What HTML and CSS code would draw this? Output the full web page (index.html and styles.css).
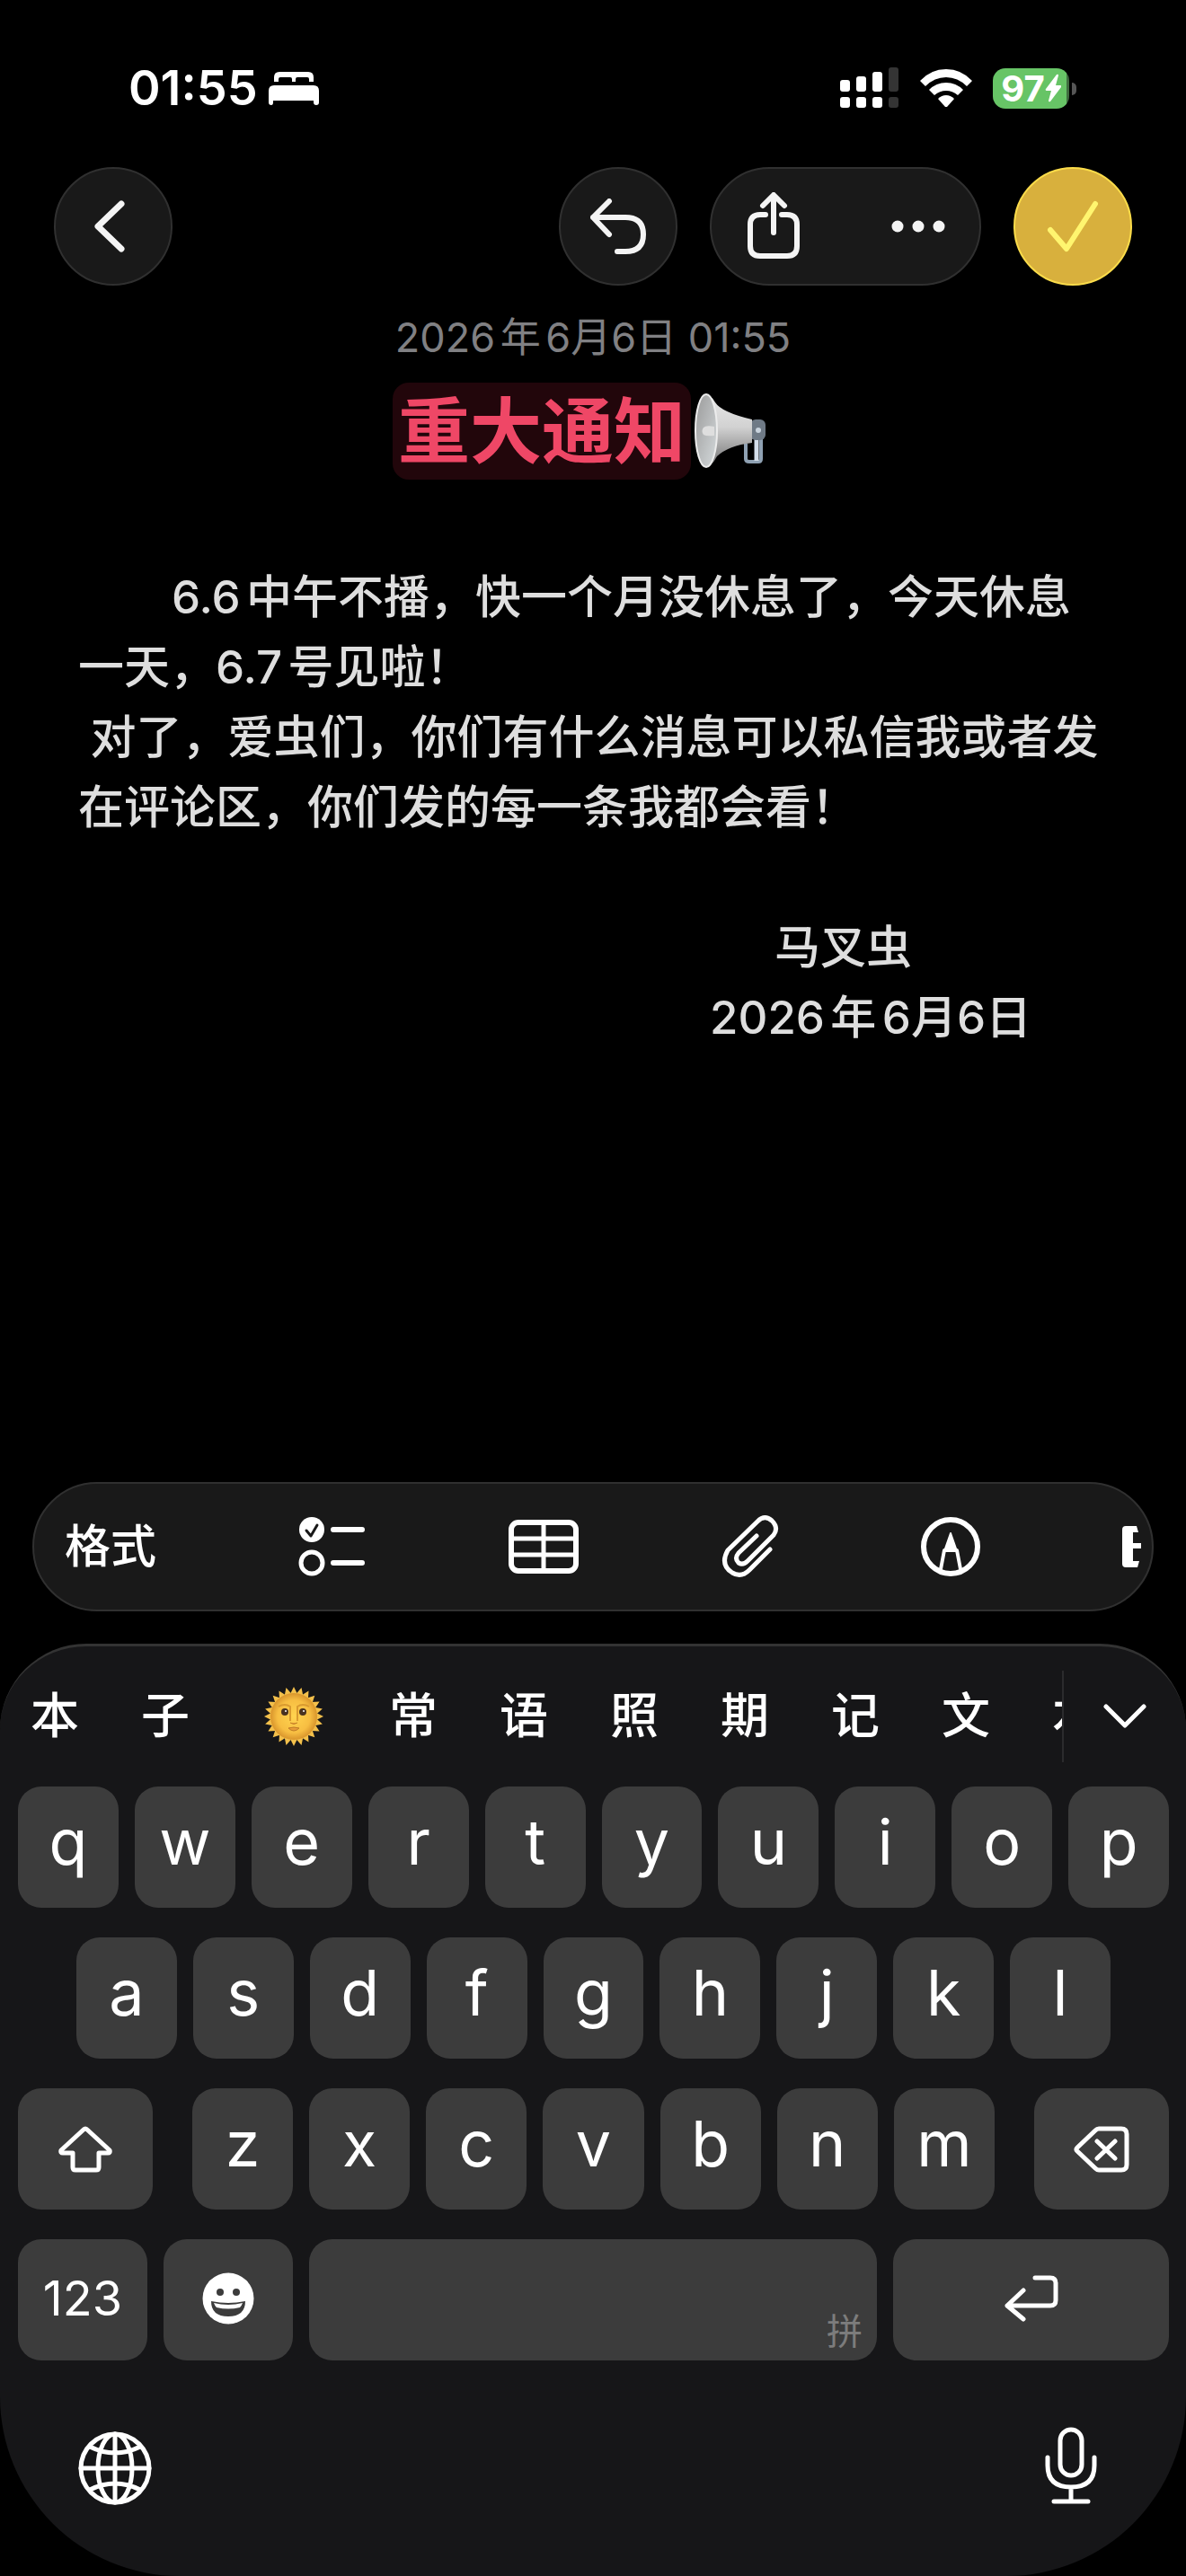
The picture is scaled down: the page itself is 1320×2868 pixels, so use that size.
FILE: index.html
```html
<!DOCTYPE html>
<html lang="zh-CN">
<head>
<meta charset="utf-8">
<meta name="viewport" content="width=device-width, initial-scale=1">
<title>重大通知</title>
<link rel="stylesheet" href="styles.css">
</head>
<body>

<!-- status bar -->
<header class="status">
  <span class="time">01:55</span>
  <svg class="bed" width="56" height="38" viewBox="0 0 56 38" fill="#fff">
    <path d="M6 12V7q0-6 6-6h32q6 0 6 6v5h-5V9q0-2-2-2h-11q-2 0-2 2v3h-4V9q0-2-2-2H13q-2 0-2 2v3z"/>
    <path d="M0 22q0-6 6-6h44q6 0 6 6v13q0 3-3 3t-3-3v-2H5v2q0 3-2 3-3 0-3-3z"/>
  </svg>
  <div class="status-right">
    <svg width="66" height="46" viewBox="0 0 66 46" fill="#fff">
      <rect x="0" y="14" width="11" height="13" rx="3"/>
      <rect x="18" y="10" width="11" height="17" rx="3"/>
      <rect x="36" y="5" width="11" height="22" rx="3"/>
      <rect x="54" y="0" width="11" height="27" rx="3" fill="#343434"/>
      <rect x="0" y="33" width="11" height="12" rx="3"/>
      <rect x="18" y="33" width="11" height="12" rx="3"/>
      <rect x="36" y="33" width="11" height="12" rx="3"/>
      <rect x="54" y="33" width="11" height="12" rx="3" fill="#343434"/>
    </svg>
    <svg class="wifi" width="58" height="42" viewBox="0 0 58 42" fill="#fff">
      <path d="M0 13Q12 0 29 0t29 13l-6 6Q42 9 29 9T6 19z"/>
      <path d="M10 23q8-8 19-8t19 8l-6 6q-6-5-13-5t-13 5z"/>
      <path d="M20 33q4-4 9-4t9 4l-8 9q-1 1-2 0z"/>
    </svg>
    <div class="battery">97<svg width="18" height="36" viewBox="0 0 18 32" fill="#fff"><path d="M13 1L1 17q-1 2 1 2h5L4 30q0 2 2 1l12-16q1-2-1-2h-5l3-11q0-2-2-1z"/></svg></div>
  </div>
</header>

<!-- top buttons -->
<nav class="topbar">
  <button class="round back" aria-label="返回">
    <svg width="34" height="58" viewBox="0 0 34 58" class="line w7"><path d="M30 4L4 29l26 25"/></svg>
  </button>
  <button class="round" aria-label="撤销">
    <svg width="62" height="62" viewBox="0 0 62 62" class="line w6"><path d="M21 3L3 21l18 19M3 21h36q20 0 20 19t-20 19h-9"/></svg>
  </button>
  <div class="pill">
    <button aria-label="共享">
      <svg width="58" height="74" viewBox="0 0 58 74" class="line w6"><path d="M20 25h-6q-11 0-11 11v24q0 11 11 11h30q11 0 11-11V36q0-11-11-11h-6M29 45V4M17 15L29 3l12 12"/></svg>
    </button>
    <button aria-label="更多">
      <svg width="60" height="14" viewBox="0 0 60 14" fill="#f4f4f4"><circle cx="7" cy="7" r="6.500"/><circle cx="30" cy="7" r="6.500"/><circle cx="53" cy="7" r="6.500"/></svg>
    </button>
  </div>
  <button class="round done" aria-label="完成">
    <svg width="58" height="58" viewBox="0 0 58 58" class="line w6"><path d="M4 33l18 21L54 4"/></svg>
  </button>
</nav>

<!-- note -->
<main class="note">
  <time class="date">2026年6<span class="tight">月6日</span> 01:55</time>
  <h1><mark>重大通知</mark><svg width="80" height="84" viewBox="0 0 80 84" role="img" aria-label="喇叭">
    <defs>
      <linearGradient id="cone" x1="0" y1="0" x2="0" y2="1"><stop offset="0" stop-color="#e8e8e8"/><stop offset=".45" stop-color="#d2d2d2"/><stop offset="1" stop-color="#6f6f70"/></linearGradient>
      <linearGradient id="bell" x1="0" y1="0" x2="1" y2="1"><stop offset="0" stop-color="#9a9a9a"/><stop offset="1" stop-color="#d5dadc"/></linearGradient>
    </defs>
    <path d="M57 56v17q0 3 4 3h10q3 0 3-3V44" fill="none" stroke="#8fa1b3" stroke-width="4"/>
    <path d="M69 42v33" stroke="#d4deea" stroke-width="5"/>
    <rect x="62" y="29" width="17" height="23" rx="6" fill="#6f7a86"/>
    <circle cx="71" cy="41" r="3" fill="#c9d3dd"/>
    <path d="M12 1q6 0 11 9 7 11 41 19v26Q38 58 25 70q-6 12-13 12z" fill="url(#cone)"/>
    <ellipse cx="13" cy="41.500" rx="12" ry="40.500" fill="url(#bell)" stroke="#ececec" stroke-width="2"/>
    <path d="M10 38q3-3 12-1v10q-9 1-12-1-3-4 0-8z" fill="#dedede"/>
  </svg></h1>
  <div class="text">
    <p class="first">6.6中午不播，快一个月没休息了，今天休息一天，6.7号见啦！</p>
    <p> 对了，爱虫们，你们有什么消息可以私信我或者发在评论区，你们发的每一条我都会看！</p>
    <p class="sign">马叉虫</p>
    <p class="sign-date">2026年6<span class="tight">月6日</span></p>
  </div>
</main>

<!-- format toolbar -->
<div class="tools">
  <button class="format">格式</button>
  <button aria-label="核对清单">
    <svg width="76" height="66" viewBox="0 0 76 66">
      <circle cx="15" cy="14" r="14" fill="#fff"/>
      <path d="M9 15l5 6 7-12" fill="none" stroke="#191919" stroke-width="3" stroke-linecap="round" stroke-linejoin="round"/>
      <circle cx="15" cy="51" r="12" fill="none" stroke="#fff" stroke-width="5"/>
      <path d="M39 14h32M39 51h32" stroke="#fff" stroke-width="6" stroke-linecap="round"/>
    </svg>
  </button>
  <button aria-label="表格">
    <svg width="78" height="60" viewBox="0 0 78 60" class="line w6"><rect x="3" y="3" width="72" height="54" rx="8"/><path d="M39 3v54M3 21h72M3 39h72" stroke-width="5"/></svg>
  </button>
  <button aria-label="附件">
    <svg width="64" height="70" viewBox="0 0 64 70" class="line w5"><path d="M54 38L31 61q-9 9-19 3-14-9-5-25L40 7q8-8 16-1 8 8 2 16L29 51q-5 5-10 2-5-5 0-11l20-19"/></svg>
  </button>
  <button aria-label="标记">
    <svg width="66" height="66" viewBox="0 0 66 66" class="line w6"><circle cx="33" cy="33" r="30"/><path d="M22 58l4-21h14l4 21" stroke-width="4"/><path d="M33 18l7 20H26z" fill="#fff" stroke-width="2"/></svg>
  </button>
  <button class="more-tool" aria-label="写作工具">
    <svg width="22" height="48" viewBox="0 0 22 48" fill="#fff"><path d="M4 1h12l2 7h-6v12h9v6h-9v14h7l-2 7H4q-4 0-4-4V5q0-4 4-4z"/></svg>
  </button>
</div>

<!-- keyboard -->
<section class="keyboard">
  <div class="candidates">
    <div class="words">
      <button>本</button>
      <button>子</button>
      <button class="sun" aria-label="太阳">
        <svg width="66" height="66" viewBox="0 0 66 66">
          <defs>
            <radialGradient id="face"><stop offset="0" stop-color="#ffd34f"/><stop offset=".7" stop-color="#f7be42"/><stop offset="1" stop-color="#d9952c"/></radialGradient>
            <path id="rays" d="M29 8l4-8 4 8zM29 58l4 8 4-8zM8 29l-8 4 8 4zM58 29l8 4-8 4z"/>
          </defs>
          <g fill="#f3c04b">
            <use href="#rays"/>
            <use href="#rays" transform="rotate(15 33 33)"/>
            <use href="#rays" transform="rotate(30 33 33)"/>
            <use href="#rays" transform="rotate(45 33 33)"/>
            <use href="#rays" transform="rotate(60 33 33)"/>
            <use href="#rays" transform="rotate(75 33 33)"/>
          </g>
          <circle cx="33" cy="33" r="26" fill="url(#face)"/>
          <path d="M16 22q7-4 13 0v16M50 22q-7-4-13 0v16" fill="none" stroke="#d99a2f" stroke-width="2"/>
          <circle cx="23" cy="28" r="4" fill="#4a3220"/><circle cx="43" cy="28" r="4" fill="#4a3220"/>
          <circle cx="24" cy="27" r="1" fill="#fff"/><circle cx="44" cy="27" r="1" fill="#fff"/>
          <path d="M29 40q4 3 8 0M27 46q6-2 12 0-6 6-12 0z" fill="#e79b38" stroke="#bf7c26" stroke-width="1"/>
        </svg>
      </button>
      <button>常</button>
      <button>语</button>
      <button>照</button>
      <button>期</button>
      <button>记</button>
      <button>文</button>
      <button>本</button>
    </div>
    <button class="expand" aria-label="展开">
      <svg width="48" height="28" viewBox="0 0 48 28" class="line w5"><path d="M3 3l21 21L45 3"/></svg>
    </button>
  </div>

  <div class="keys">
    <div class="row">
      <button>q</button><button>w</button><button>e</button><button>r</button><button>t</button><button>y</button><button>u</button><button>i</button><button>o</button><button>p</button>
    </div>
    <div class="row second">
      <button>a</button><button>s</button><button>d</button><button>f</button><button>g</button><button>h</button><button>j</button><button>k</button><button>l</button>
    </div>
    <div class="row third">
      <button class="icon" aria-label="上档">
        <svg width="60" height="52" viewBox="0 0 60 52" class="line w5"><path d="M28 4q2-2 4 0l25 23q1 3-2 3H45v16q0 3-3 3H19q-3 0-3-3V30H5q-3 0-2-3z"/></svg>
      </button>
      <div class="letters">
        <button>z</button><button>x</button><button>c</button><button>v</button><button>b</button><button>n</button><button>m</button>
      </div>
      <button class="icon" aria-label="删除">
        <svg width="62" height="52" viewBox="0 0 62 52" class="line w5"><path d="M28 3h25q6 0 6 6v34q0 6-6 6H28q-2 0-4-2L4 28q-2-2 0-4L24 5q2-2 4-2zM26 17l20 19M46 17L26 36"/></svg>
      </button>
    </div>
    <div class="row fourth">
      <button class="numbers">123</button>
      <button class="icon" aria-label="表情">
        <svg width="58" height="58" viewBox="0 0 58 58">
          <circle cx="29" cy="29" r="28.500" fill="#fff"/>
          <circle cx="20" cy="22" r="4" fill="#3c3c3c"/><circle cx="38" cy="22" r="4" fill="#3c3c3c"/>
          <path d="M10 32q19 4 38 0 0 17-19 17T10 32z" fill="#3c3c3c"/>
          <path d="M13 34q16 4 32 0-1 3-3 5-13 3-26 0-2-2-3-5z" fill="#fff"/>
        </svg>
      </button>
      <button class="space" aria-label="空格">拼</button>
      <button class="icon" aria-label="换行">
        <svg width="60" height="52" viewBox="0 0 60 52" class="line w5"><path d="M34 3h17q6 0 6 6v19q0 6-6 6H3M21 17L3 34l18 15"/></svg>
      </button>
    </div>
  </div>

  <div class="bottom">
    <button aria-label="切换键盘">
      <svg width="82" height="82" viewBox="0 0 82 82" class="line w5"><circle cx="41" cy="41" r="38"/><ellipse cx="41" cy="41" rx="19" ry="38"/><path d="M41 3v76M3 41h76M13 17q28 14 56 0M13 65q28-14 56 0"/></svg>
    </button>
    <button class="mic" aria-label="听写">
      <svg width="58" height="86" viewBox="0 0 58 86" class="line w5"><rect x="17" y="3" width="24" height="51" rx="12"/><path d="M3 34v9q0 24 26 24t26-24v-9M29 67v15M10 83h38"/></svg>
    </button>
  </div>
</section>

</body>
</html>
```

FILE: styles.css
```css
* {box-sizing:border-box;}
body {margin:0; min-height:100vh; display:flex; flex-direction:column; background:#000; color:#fff; font-family:Inter, "Noto Sans CJK SC", sans-serif;}
button {margin:0; padding:0; border:0; background:none; color:inherit; font:inherit; display:flex; align-items:center; justify-content:center;}
svg {display:block; flex:none;}

/* stroked icons */
.line {fill:none; stroke:#fff; stroke-linecap:round; stroke-linejoin:round;}
.w5 {stroke-width:5px;}
.w6 {stroke-width:6px;}
.w7 {stroke-width:7px;}

/* status bar */
.status {display:flex; align-items:center; height:186px; padding:10px 130px 0 143px;}
.time {font-size:54px; font-weight:600; line-height:64px;}
.bed {margin-left:12px;}
.status-right {display:flex; align-items:center; gap:23px; margin-left:auto;}
.battery {position:relative; display:flex; align-items:center; justify-content:center; width:85px; height:45px; border-radius:14px; background:linear-gradient(90deg, #67c466 97%, #3f6b3f 97%); font-size:40px; font-weight:700; line-height:45px;}
.battery::after {content:""; position:absolute; left:88px; top:16px; width:5px; height:14px; border-radius:0 5px 5px 0; background:#555;}

/* top buttons */
.topbar {display:flex; gap:36px; padding:0 60px;}
.round, .pill {height:132px; border:2px solid #303030; border-radius:66px; background:#191919;}
.round {width:132px;}
.back {margin-right:auto; padding-right:8px;}
.pill {display:flex; width:302px;}
.pill button {flex:1;}
.pill button:first-child {padding-right:12px; padding-bottom:2px;}
.pill button:last-child {padding-left:12px;}
.topbar .line {stroke:#f4f4f4;}
.done {border-color:#fbdc4a; background:#d8b03d;}
.topbar .done .line {stroke:#fff56f;}

/* note */
.note {flex:1; padding:26px 87px 0 87px;}
.date {display:block; color:#808083; font-size:45px; line-height:64px; text-align:center; text-autospace:normal;}
h1 {display:flex; align-items:center; justify-content:center; gap:4px; margin:18px 30px 0 0; font-size:80px; line-height:108px;}
mark {padding:0 6px; border-radius:18px; background:#22060b; color:#ef4766;}
.text {margin-top:92px; color:#dedede; font-size:51px; font-weight:500; line-height:78px; text-autospace:normal;}
.text p {margin:0; white-space:pre-wrap;}
.tight {text-autospace:no-autospace;}
.text .first {text-indent:104px;}
.text .sign {margin-top:78px; padding-right:218px; text-align:right;}
.text .sign-date {padding-right:85px; text-align:right;}

/* format toolbar */
.tools {display:flex; align-items:center; justify-content:space-between; height:144px; margin:0 36px 36px; padding:0 11px 0 34px; border:2px solid #303030; border-radius:72px; background:#191919;}
.format {font-size:51px; font-weight:500; line-height:72px; white-space:nowrap;}

/* keyboard */
.keyboard {border-top:3px solid #333; border-radius:96px 96px 200px 200px; background:#161618;}
.candidates {display:flex; align-items:center; height:156px;}
.words {display:flex; align-items:center; gap:69px; flex:1; min-width:0; height:102px; padding-left:34px; overflow:hidden; border-right:2px solid #2b2b2d; font-size:54px; font-weight:500; line-height:80px;}
.words button {flex:none; width:54px;}
.words .sun {width:84px; padding-left:10px;}
.expand {width:136px;}
.keys {display:grid; gap:33px; padding:0 19px 0 20px;}
.row {display:flex; gap:18px;}
.row button {flex:1; height:135px; padding-bottom:12px; border-radius:26px; background:#3c3c3c; font-size:70px; line-height:84px;}
.row .icon {padding-bottom:0;}
.second {padding:0 65px;}
.third {gap:44px;}
.third .icon {flex:none; width:150px;}
.letters {display:flex; gap:18px; flex:1;}
.fourth .icon, .fourth .numbers {flex:none; width:144px;}
.fourth .icon {padding-bottom:4px;}
.fourth .numbers {padding-bottom:4px; font-size:54px;}
.fourth .icon:last-child {width:307px;}
.row .space {align-items:flex-end; justify-content:flex-end; padding:0 16px 8px; color:#7c7c7c; font-size:40px; line-height:48px;}
.bottom {display:flex; justify-content:space-between; align-items:center; height:240px; padding:0 99px 0 87px;}
.mic {padding-bottom:6px;}
```
